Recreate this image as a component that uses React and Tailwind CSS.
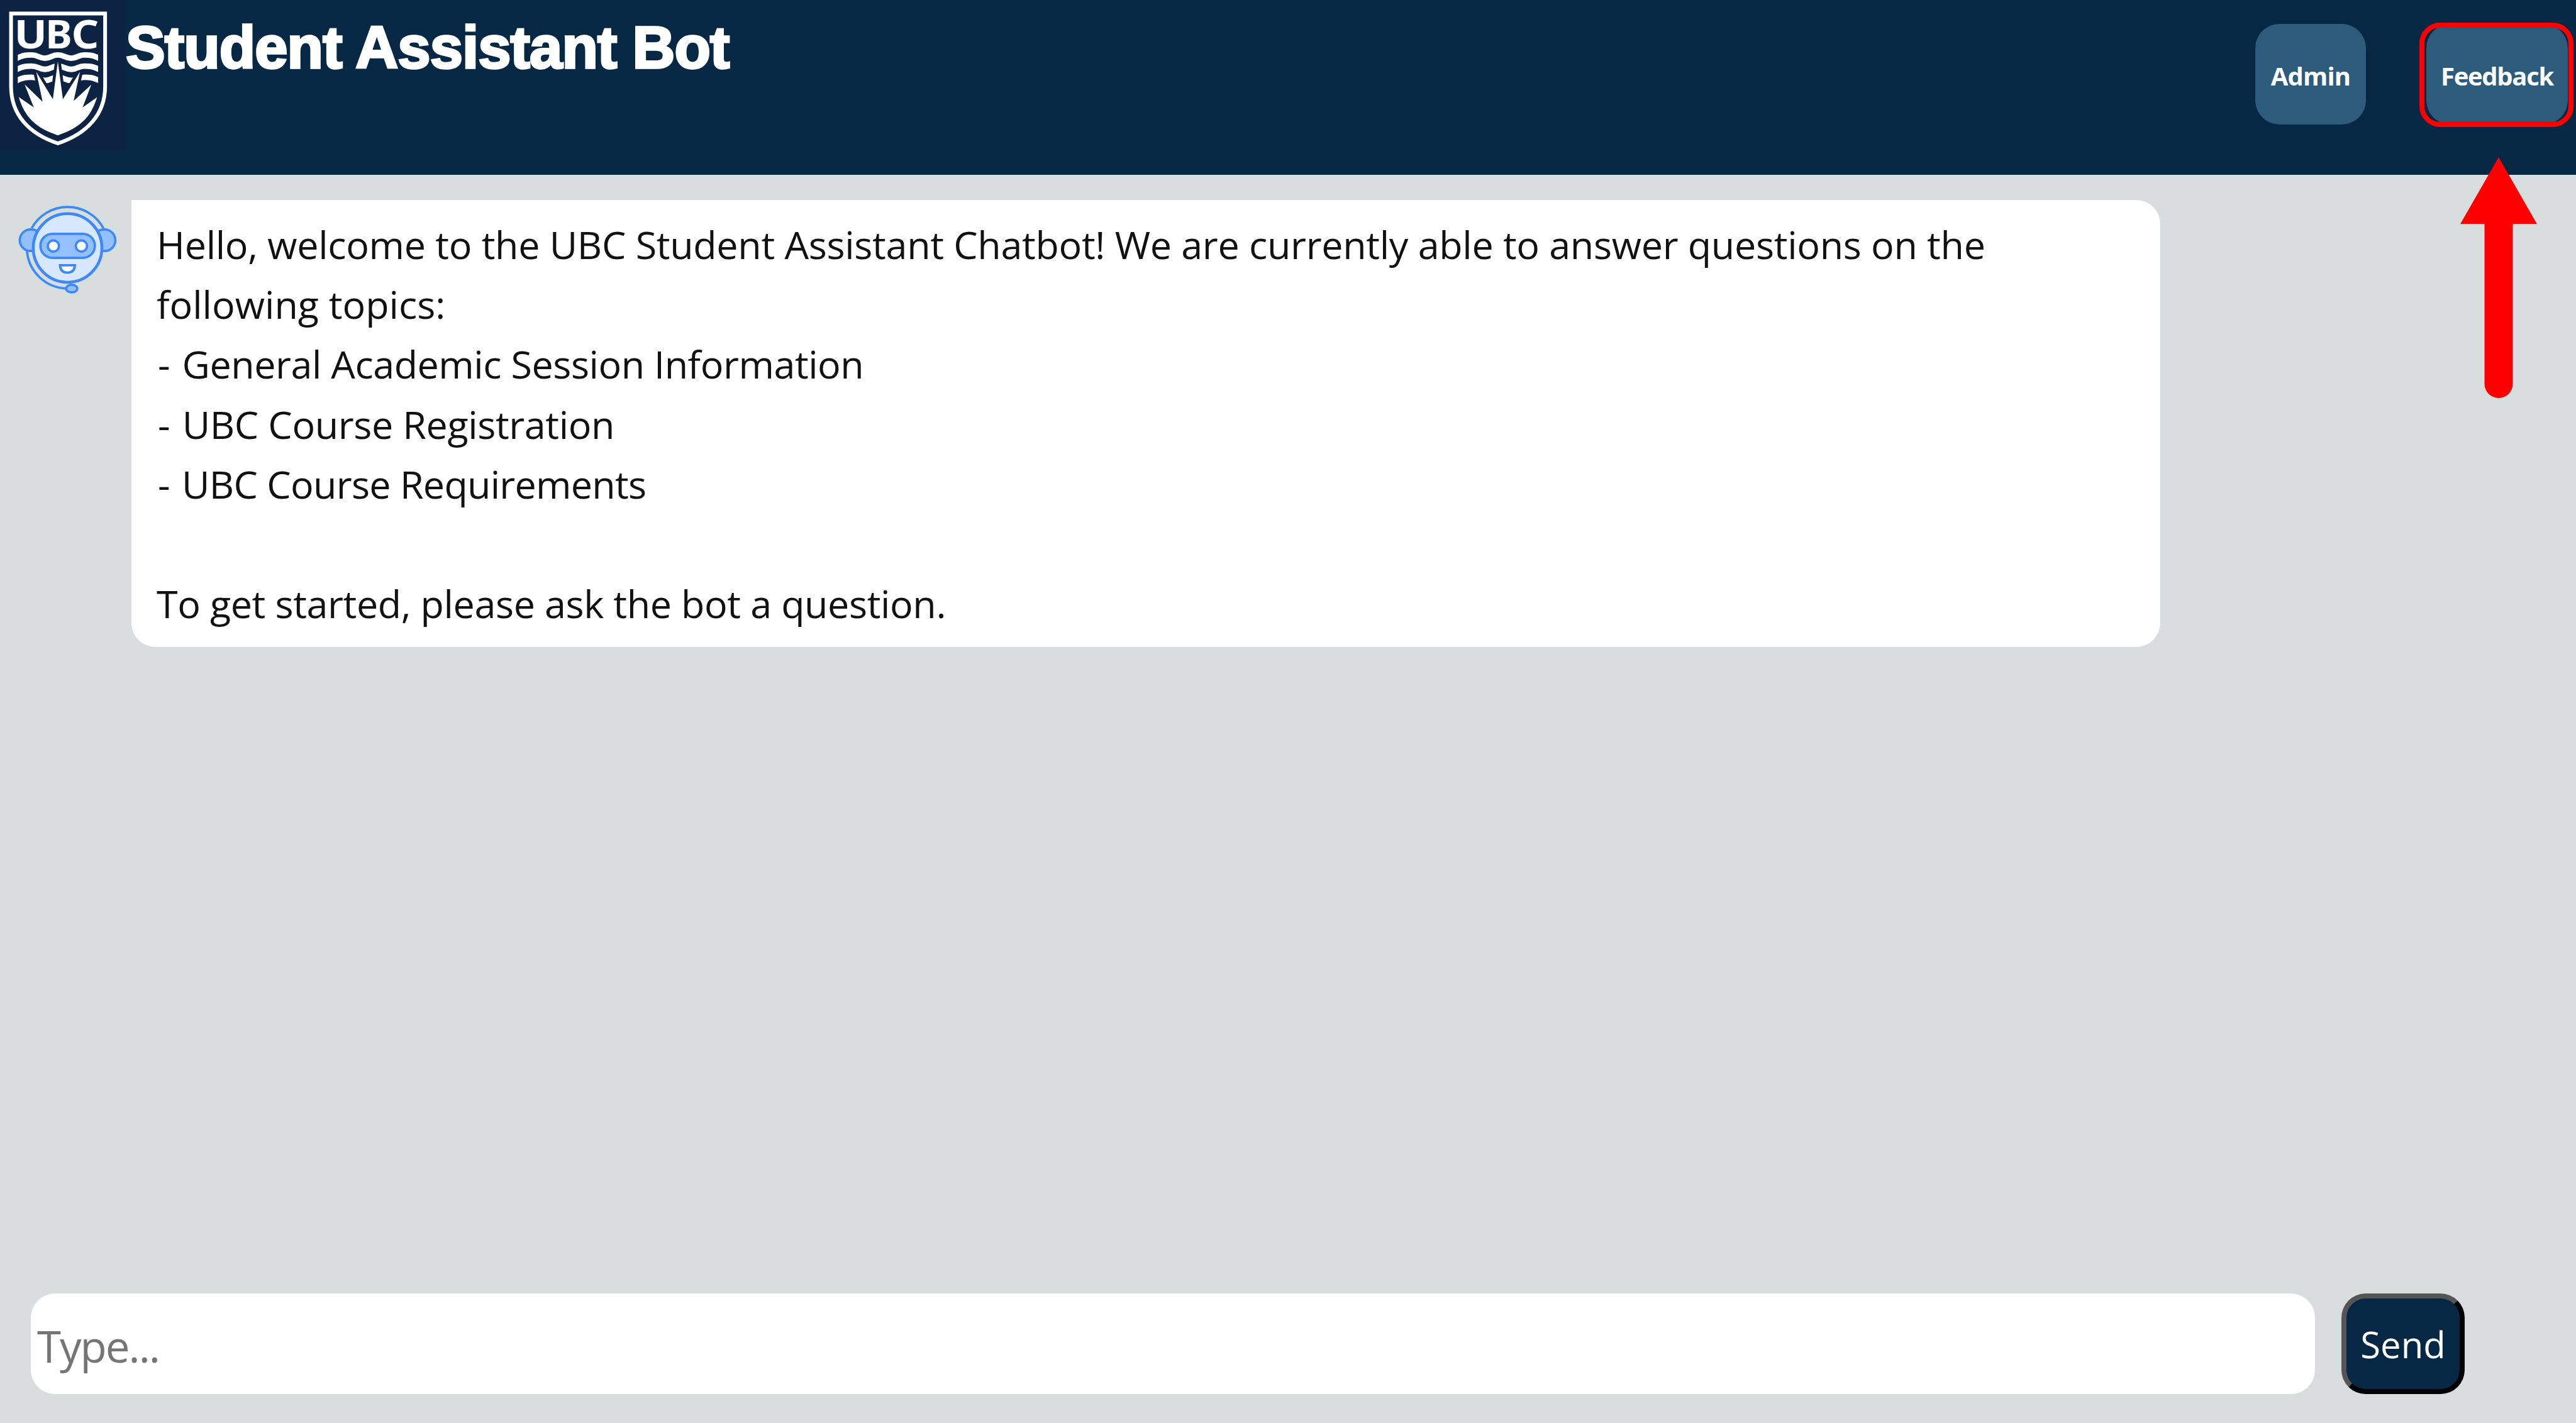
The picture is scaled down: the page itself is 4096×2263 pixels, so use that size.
const topics = [
  { label: "General Academic Session Information", spacing: "tracking-[-0.45px]" },
  { label: "UBC Course Registration", spacing: "tracking-[-0.38px]" },
  { label: "UBC Course Requirements", spacing: "tracking-[-0.72px]" },
];

function UbcLogo() {
  const rays =
    "M104 540 L188 598 L137 470 L237 566 L202 400 L294 552 L322 342 L350 552 L445 400 L410 562 L508 472 L460 598 L540 542 C505 655 445 712 322 753 C199 712 139 655 104 540Z";
  const wave =
    "M90 326 C130 306 145 306 175 306 C215 306 215 324 250 324 C285 324 285 306 322 306 C359 306 361 324 397 324 C432 324 432 306 470 306 C500 306 515 306 556 326";
  return (
    <svg viewBox="0 0 700 833" className="h-[238px] w-[200px] shrink-0 bg-[#0c2344]" preserveAspectRatio="none">
      <defs>
        <clipPath id="waves">
          <rect x="99" y="280" width="447" height="190" />
        </clipPath>
      </defs>
      <path d="M61.5 75 H585 V480 C585 640 480 746 322 798 C164 746 61.5 640 61.5 480Z" fill="none" stroke="#fff" strokeWidth="21" />
      <g fill="#fff" fontFamily="'Noto Sans', sans-serif" fontWeight="700" fontSize="217">
        <text transform="translate(79 269) scale(1.12 1)">U</text>
        <text transform="translate(253 269) scale(1.03 1)">B</text>
        <text transform="translate(397 269) scale(1.1 1)">C</text>
      </g>
      <g clipPath="url(#waves)" fill="none" stroke="#fff" strokeWidth="31">
        <path d={wave} />
        <path d={wave} transform="translate(0 62)" />
        <path d={wave} transform="translate(0 124)" />
      </g>
      <path d={rays} fill="#0c2344" stroke="#0c2344" strokeWidth="32" strokeLinejoin="bevel" />
      <path d={rays} fill="#fff" />
    </svg>
  );
}

function BotAvatar() {
  return (
    <svg viewBox="100 120 560 500" className="h-[143px] w-[160px] shrink-0">
      <g fill="none" stroke="#3d88fc" strokeWidth="13">
        <path d="M178 250 A227 227 0 0 1 578 250" />
        <path d="M152 376 A227 227 0 0 0 370 584" />
        <path d="M210 264 Q192 256 172 256 A60 60 0 0 0 172 376 H200Z" fill="#94c0ff" />
        <path d="M546 264 Q566 256 584 256 A60 60 0 0 1 584 376 H556Z" fill="#94c0ff" />
        <circle cx="378" cy="359" r="191" fill="#d6e7fe" strokeWidth="16" />
        <rect x="227" y="280" width="303" height="134" rx="67" fill="#94c0ff" />
        <circle cx="299" cy="348" r="31" fill="#fff" />
        <circle cx="455" cy="348" r="31" fill="#fff" />
        <path d="M336 455 H419 Q417 495 377 496 Q338 495 336 455Z" fill="#fff" />
        <ellipse cx="401" cy="585" rx="31" ry="21" fill="#94c0ff" />
      </g>
    </svg>
  );
}

function PointerArrow() {
  return (
    <svg viewBox="0 0 122 383" className="absolute left-[3911.5px] top-[249.5px] h-[383px] w-[122px]">
      <path d="M61 0 L122 106.3 H83.5 V360.5 A22.5 22.5 0 0 1 38.5 360.5 V106.3 H0Z" fill="#f00" />
    </svg>
  );
}

export default function App() {
  return (
    <div className="relative flex h-[2263px] w-[4096px] flex-col overflow-hidden bg-[#d8dede] font-['Open_Sans',sans-serif]">
      <header className="flex h-[278px] shrink-0 items-start bg-[#062845]">
        <UbcLogo />
        <h1 className="mt-[20px] whitespace-nowrap font-['Liberation_Sans',sans-serif] text-[94px] font-bold leading-[112px] tracking-[-0.9px] text-white [-webkit-text-stroke:3.5px_white]">
          Student Assistant Bot
        </h1>
        <nav className="mr-[13px] mt-[38px] ml-auto flex gap-[96px]">
          <button className="h-[160px] w-[176px] rounded-[38.5px] bg-[#2d5b7b] pt-[5px] text-[40px] font-bold tracking-[-0.8px] text-white">
            Admin
          </button>
          <div className="relative">
            <button className="h-[160px] w-[225px] rounded-[38.5px] bg-[#2d5b7b] pt-[5px] text-[40px] font-bold tracking-[-1.3px] text-white">
              Feedback
            </button>
            <span className="absolute -left-[11px] -top-[2px] h-[165.5px] w-[245px] rounded-[33px] border-[8px] border-[#f00]" />
          </div>
        </nav>
      </header>

      <main className="flex flex-1 items-start pt-[39.5px]">
        <div className="ml-[28px] mt-[8px] w-[181px] shrink-0">
          <BotAvatar />
        </div>
        <div className="h-[711px] w-[3226px] whitespace-nowrap rounded-[38.5px] rounded-tl-none bg-white pl-[40px] pt-[23.5px] text-[61px] leading-[95.2px] text-[#111]">
          <p className="tracking-[-0.3px]">
            Hello, welcome to the UBC Student Assistant Chatbot! We are currently able to answer questions on the
          </p>
          <p>following topics:</p>
          {topics.map(({ label, spacing }) => (
            <p key={label} className={spacing}>
              <span className="ml-[2px] mr-[4px]">-</span> {label}
            </p>
          ))}
          <p className="mt-[95.2px] tracking-[-0.38px]">To get started, please ask the bot a question.</p>
        </div>
      </main>

      <form className="mb-[46px] ml-[49px] flex h-[160px] shrink-0 gap-[42px]">
        <input
          placeholder="Type..."
          className="h-[160px] w-[3632px] rounded-[38.5px] bg-white px-[10px] pt-[6px] text-[69px] tracking-[-2px] placeholder:text-[#757575]"
        />
        <button
          type="button"
          className="h-[160px] w-[196px] rounded-[38.5px] border-[8px] border-t-[#555] border-r-black border-b-black border-l-[#555] bg-[#062845] text-[58px] text-white"
        >
          Send
        </button>
      </form>

      <PointerArrow />
    </div>
  );
}
